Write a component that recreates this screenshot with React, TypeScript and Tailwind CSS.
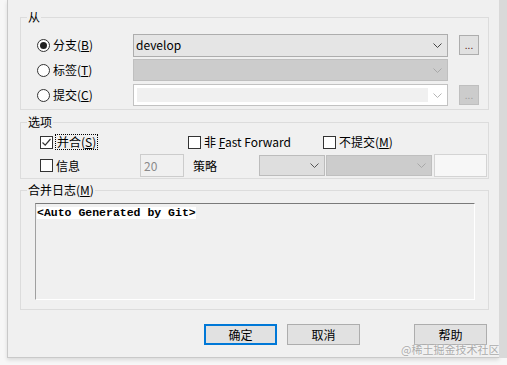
import type { ReactNode } from 'react'

function Chevron({ color }: { color: string }) {
  return (
    <svg width="9" height="5" viewBox="0 0 9 5" className="shrink-0">
      <path d="M0.5 0.5 L4.5 4.5 L8.5 0.5" fill="none" stroke={color} strokeWidth="1" />
    </svg>
  )
}

function Radio({ checked }: { checked?: boolean }) {
  return (
    <span className="flex h-[13px] w-[13px] shrink-0 items-center justify-center rounded-full border border-[#333] bg-white">
      {checked && <span className="h-[7px] w-[7px] rounded-full bg-[#222]" />}
    </span>
  )
}

function Check({ checked }: { checked?: boolean }) {
  return (
    <span className="flex h-[13px] w-[13px] shrink-0 items-center justify-center border border-[#333] bg-white">
      {checked && (
        <svg width="11" height="11" viewBox="0 0 11 11">
          <path d="M1.5 5.5 L4.2 8.2 L9.5 2" fill="none" stroke="#333" strokeWidth="1.2" />
        </svg>
      )}
    </span>
  )
}

function Key({ k }: { k: string }) {
  return (
    <>
      (<span className="underline underline-offset-1">{k}</span>)
    </>
  )
}

function Group({ label, className, children }: { label: ReactNode; className?: string; children: ReactNode }) {
  return (
    <fieldset className={`min-w-0 w-[469px] border border-[#dcdcdc] ${className ?? ''}`}>
      <legend className="ml-[6px] px-[1px] text-[12px] leading-[16px]">{label}</legend>
      {children}
    </fieldset>
  )
}

export default function App() {
  return (
    <div className="relative flex h-[365px] w-[507px] bg-[#f7f7f7] font-['Noto_Sans_CJK_SC','Noto_Sans',sans-serif] text-black">
      <div className="ml-[7px] flex h-[358px] w-[492px] flex-col border-b border-l border-[#c9c9c9] bg-[#f0f0f0] pl-[12px] pt-[9px] shadow-[0_2px_4px_rgba(0,0,0,0.12)]">
        {/* 从 */}
        <Group label="从">
          <div className="flex flex-col gap-[3px] pb-[3px] pl-[16px] pt-[9px] text-[12px]">
            <div className="flex h-[22px] items-center">
              <div className="flex w-[96px] items-center gap-[3px]">
                <Radio checked />
                <span>分支<Key k="B" /></span>
              </div>
              <div className="flex h-[23px] w-[315px] items-center justify-between border border-[#adadad] bg-[#e5e5e5] pl-[2px] pr-[5px]">
                <span>develop</span>
                <Chevron color="#444" />
              </div>
              <div className="ml-[11px] flex h-[20px] w-[20px] items-center justify-center border border-[#adadad] bg-[#e1e1e1] text-[10px] leading-none text-[#5a2020]">
                ...
              </div>
            </div>
            <div className="flex h-[22px] items-center">
              <div className="flex w-[96px] items-center gap-[3px]">
                <Radio />
                <span>标签<Key k="T" /></span>
              </div>
              <div className="flex h-[22px] w-[315px] items-center justify-end border border-[#bfbfbf] bg-[#cccccc] pr-[5px]">
                <Chevron color="#a8a8a8" />
              </div>
            </div>
            <div className="flex h-[22px] items-center">
              <div className="flex w-[96px] items-center gap-[3px]">
                <Radio />
                <span>提交<Key k="C" /></span>
              </div>
              <div className="flex h-[22px] w-[315px] items-center border border-[#c2c2c2] bg-white pl-[3px] pr-[5px]">
                <div className="h-[14px] w-[291px] bg-[#f0f0f0]" />
                <span className="ml-auto">
                  <Chevron color="#b5b5b5" />
                </span>
              </div>
              <div className="ml-[11px] flex h-[20px] w-[20px] items-center justify-center border border-[#bfbfbf] bg-[#cccccc] text-[10px] leading-none text-[#a0a0a0]">
                ...
              </div>
            </div>
          </div>
        </Group>

        {/* 选项 */}
        <Group label="选项" className="mt-[4px]">
          <div className="flex flex-col gap-[4px] pb-[1px] pl-[19px] pt-[4px] text-[12px]">
            <div className="flex h-[16px] items-center">
              <div className="flex w-[148px] items-center gap-[2px]">
                <Check checked />
                <span className="flex h-[16px] items-center border border-dotted border-black px-[1px] leading-none">
                  并合<Key k="S" />
                </span>
              </div>
              <div className="flex w-[135px] items-center gap-[3px]">
                <Check />
                <span>
                  非 <span className="underline underline-offset-1">F</span>ast Forward
                </span>
              </div>
              <div className="flex items-center gap-[3px]">
                <Check />
                <span>不提交<Key k="M" /></span>
              </div>
            </div>
            <div className="flex h-[23px] items-center">
              <div className="flex w-[100px] items-center gap-[3px]">
                <Check />
                <span>信息</span>
              </div>
              <div className="flex h-[23px] w-[44px] items-center border border-[#cccccc] bg-[#f0f0f0] pl-[3px] text-[#8a8a8a]">
                20
              </div>
              <span className="ml-[9px] w-[66px]">策略</span>
              <div className="flex h-[21px] w-[66px] items-center justify-end border border-[#bcbcbc] bg-[#dedede] pr-[5px]">
                <Chevron color="#555" />
              </div>
              <div className="ml-[1px] flex h-[21px] w-[106px] items-center justify-end border border-[#bfbfbf] bg-[#cccccc] pr-[5px]">
                <Chevron color="#a8a8a8" />
              </div>
              <div className="ml-[2px] h-[23px] w-[53px] border border-[#d4d4d4] bg-[#f7f7f7]" />
            </div>
          </div>
        </Group>

        {/* 合并日志 */}
        <Group label={<>合并日志<Key k="M" /></>} className="mt-[3px]">
          <div className="pb-[9px] pl-[14px] pt-[5px]">
            <div className="h-[97px] w-[440px] border border-b-white border-l-[#a0a0a0] border-r-white border-t-[#7a7a7a] bg-[#f0f0f0] pl-[1px] pt-[3px] font-['Liberation_Mono',monospace] text-[11.5px] leading-[12px]">
              <span className="inline-block bg-white font-bold leading-[12px]">
                &lt;Auto Generated by Git&gt;
              </span>
            </div>
          </div>
        </Group>

        {/* buttons */}
        <div className="mt-[14px] flex text-[12px]">
          <button className="ml-[184px] flex h-[21px] w-[73px] items-center justify-center border-2 border-[#0078d7] bg-[#e1e1e1]">
            确定
          </button>
          <button className="ml-[10px] flex h-[21px] w-[73px] items-center justify-center border border-[#adadad] bg-[#e1e1e1]">
            取消
          </button>
          <button className="ml-[54px] flex h-[21px] w-[73px] items-center justify-center border border-[#adadad] bg-[#e1e1e1]">
            帮助
          </button>
        </div>
      </div>
      <div className="h-[358px] w-[8px] bg-[#d9d9d9]" />

      <span className="absolute left-[401px] top-[342px] text-[11px] leading-[14px] text-[#ababab] [text-shadow:0_0_2px_#fff]">
        @稀土掘金技术社区
      </span>
    </div>
  )
}
